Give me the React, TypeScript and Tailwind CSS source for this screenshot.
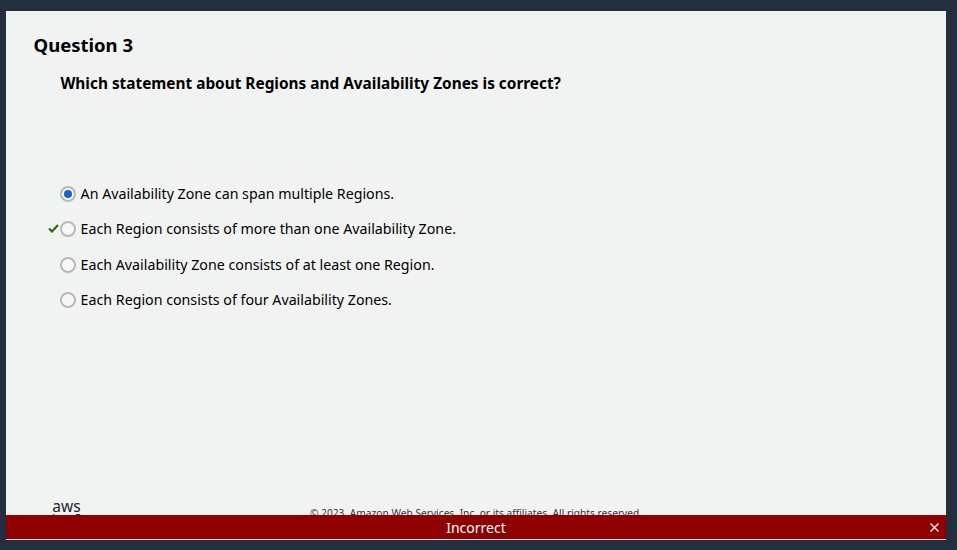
const options = [
  { label: 'An Availability Zone can span multiple Regions.', selected: true, correct: false },
  { label: 'Each Region consists of more than one Availability Zone.', selected: false, correct: true },
  { label: 'Each Availability Zone consists of at least one Region.', selected: false, correct: false },
  { label: 'Each Region consists of four Availability Zones.', selected: false, correct: false },
];

export default function App() {
  return (
    <div className="h-[550px] w-[957px] overflow-hidden bg-[#232f3e] pt-[11px] pl-[6px] pr-[11px] font-['Noto_Sans',sans-serif]">
      <div className="relative flex h-[529px] flex-col bg-[#f1f3f3] text-black">
        <h1 className="mt-[21px] ml-[27.5px] text-[18.5px] leading-[26px] font-bold">Question 3</h1>
        <p className="mt-[14px] ml-[54.5px] text-[15.38px] leading-[24px] font-bold">
          Which statement about Regions and Availability Zones is correct?
        </p>

        <div className="mt-[80.4px] ml-[42px] flex flex-col">
          {options.map((o) => (
            <div key={o.label} className="flex h-[35.4px] items-center">
              <span className="flex w-[12px] justify-start">
                {o.correct && (
                  <svg className="mb-[2px]" width="11" height="9" viewBox="0 0 11 9" fill="none">
                    <path d="M1 4.5 L4 7.5 L10 1" stroke="#2d6a12" strokeWidth="2.2" />
                  </svg>
                )}
              </span>
              <span className="flex h-[16px] w-[16px] items-center justify-center rounded-full border-2 border-[#b8b8b8] bg-[#f6f7f7]">
                {o.selected && <span className="h-[8px] w-[8px] rounded-full bg-[#1166cc]" />}
              </span>
              <span className="ml-[4.6px] text-[14.22px] leading-[20px]">{o.label}</span>
            </div>
          ))}
        </div>

        <div className="mt-auto flex h-[42px] items-start">
          <div className="ml-[46px] flex w-[29px] flex-col items-center">
            <span className="text-[15.5px] leading-[17px] text-[#1b2530]">aws</span>
            <svg className="-mt-[1px]" width="29" height="6" viewBox="0 0 29 6" fill="none">
              <path d="M1 0.5 C8 5 20 5 27 1" stroke="#232f3e" strokeWidth="1.2" />
              <path d="M24 0.5 L28 0.5 L27.5 4" stroke="#232f3e" strokeWidth="1" />
            </svg>
          </div>
          <p className="ml-[229px] mt-[8px] text-[10.2px] leading-[14px] text-[#333]">
            © 2023, Amazon Web Services, Inc. or its affiliates. All rights reserved.
          </p>
        </div>

        <div className="absolute bottom-0 left-0 right-0 flex h-[25px] items-center justify-center border-b border-[#d8d8d8] bg-[#8f0000]">
          <span className="text-[14px] text-white">Incorrect</span>
          <svg className="absolute right-[7px] top-[8px]" width="9" height="9" viewBox="0 0 9 9" fill="none">
            <path d="M0.5 0.5 L8.5 8.5 M8.5 0.5 L0.5 8.5" stroke="#fff" strokeWidth="1.3" />
          </svg>
        </div>
      </div>
    </div>
  );
}
